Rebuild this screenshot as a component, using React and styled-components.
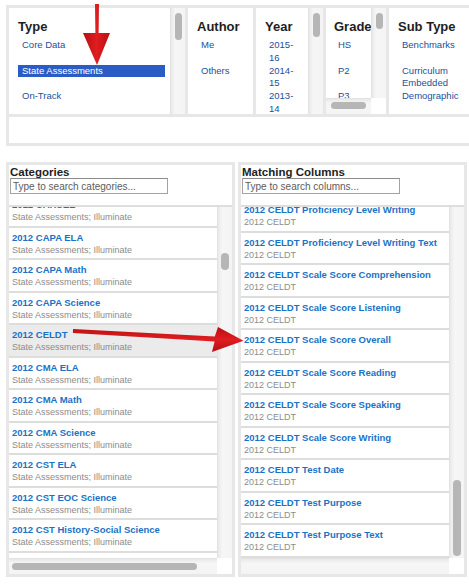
import React from "react";
import styled, { createGlobalStyle } from "styled-components";

const GlobalStyle = createGlobalStyle`
    html, body {
        margin: 0;
        padding: 0;
        background: #ffffff;
        overflow: hidden;
    }
    body {
        font-family: "Liberation Sans", Arial, sans-serif;
    }
`;

const FRAME = "#e7e7e7";

const typeItems = ["Core Data", "State Assessments", "On-Track"];
const authorItems = ["Me", "Others"];
const yearItems = ["2015-16", "2014-15", "2013-14"];
const gradeItems = ["HS", "P2", "P3"];
const subTypeItems = ["Benchmarks", "Curriculum Embedded", "Demographic"];

const categories = [
    "2012 CAHSEE",
    "2012 CAPA ELA",
    "2012 CAPA Math",
    "2012 CAPA Science",
    "2012 CELDT",
    "2012 CMA ELA",
    "2012 CMA Math",
    "2012 CMA Science",
    "2012 CST ELA",
    "2012 CST EOC Science",
    "2012 CST History-Social Science",
    "2012 CST Math",
];

const columns = [
    "Proficiency Level Writing",
    "Proficiency Level Writing Text",
    "Scale Score Comprehension",
    "Scale Score Listening",
    "Scale Score Overall",
    "Scale Score Reading",
    "Scale Score Speaking",
    "Scale Score Writing",
    "Test Date",
    "Test Purpose",
    "Test Purpose Text",
];

const App = () => {
    return (
        <Page>
            <GlobalStyle />
            <FilterPanel>
                <ColumnsRow>
                    <Column width="179px">
                        <ColumnBody>
                            <ColHeader>Type</ColHeader>
                            {typeItems.map((t) => (
                                <Option key={t} padRight="5px">
                                    <OptionLabel selected={t === "State Assessments"}>{t}</OptionLabel>
                                </Option>
                            ))}
                        </ColumnBody>
                        <VTrack>
                            <Thumb top="5px" height="27px" />
                        </VTrack>
                    </Column>

                    <Column width="68px">
                        <ColumnBody>
                            <ColHeader>Author</ColHeader>
                            {authorItems.map((t) => (
                                <Option key={t}>
                                    <OptionLabel>{t}</OptionLabel>
                                </Option>
                            ))}
                        </ColumnBody>
                    </Column>

                    <Column width="70px">
                        <ColumnBody>
                            <ColHeader>Year</ColHeader>
                            {yearItems.map((t) => (
                                <Option key={t}>
                                    <OptionLabel labelWidth="30px">{t}</OptionLabel>
                                </Option>
                            ))}
                        </ColumnBody>
                        <VTrack>
                            <Thumb top="5px" height="24px" />
                        </VTrack>
                    </Column>

                    <Column width="63px" stacked>
                        <GradeTop>
                            <ColumnBody pad="8px">
                                <ColHeader>Grade</ColHeader>
                                {gradeItems.map((t) => (
                                    <Option key={t}>
                                        <OptionLabel>{t}</OptionLabel>
                                    </Option>
                                ))}
                            </ColumnBody>
                            <VTrack>
                                <Thumb top="5px" height="16px" />
                            </VTrack>
                        </GradeTop>
                        <HBar>
                            <HTrack>
                                <HThumb left="5px" width="35px" top="3px" />
                            </HTrack>
                            <Corner />
                        </HBar>
                    </Column>

                    <Column width="90px" last>
                        <ColumnBody>
                            <ColHeader>Sub Type</ColHeader>
                            {subTypeItems.map((t) => (
                                <Option key={t}>
                                    <OptionLabel>{t}</OptionLabel>
                                </Option>
                            ))}
                        </ColumnBody>
                    </Column>
                </ColumnsRow>
                <FilterFooter />
            </FilterPanel>

            <Lists>
                <ListPanel>
                    <PanelHead>
                        <PanelTitle>Categories</PanelTitle>
                        <SearchInput placeholder="Type to search categories..." />
                    </PanelHead>
                    <ListArea>
                        <Rows>
                            <RowsInner offset="-12px">
                                {categories.map((c) => (
                                    <Row key={c} selected={c === "2012 CELDT"}>
                                        <RowTitle>{c}</RowTitle>
                                        <RowSub>State Assessments; Illuminate</RowSub>
                                    </Row>
                                ))}
                            </RowsInner>
                        </Rows>
                        <VTrack list>
                            <Thumb top="46px" height="17px" wide />
                        </VTrack>
                    </ListArea>
                    <HBar list>
                        <HTrack>
                            <HThumb left="3px" width="185px" top="4px" />
                        </HTrack>
                        <Corner />
                    </HBar>
                </ListPanel>

                <ListPanel>
                    <PanelHead>
                        <PanelTitle>Matching Columns</PanelTitle>
                        <SearchInput placeholder="Type to search columns..." />
                    </PanelHead>
                    <ListArea>
                        <Rows>
                            <RowsInner offset="-6.7px">
                                {columns.map((c) => (
                                    <Row key={c}>
                                        <RowTitle>2012 CELDT {c}</RowTitle>
                                        <RowSub>2012 CELDT</RowSub>
                                    </Row>
                                ))}
                            </RowsInner>
                        </Rows>
                        <VTrack list>
                            <Thumb top="273px" height="76px" wide />
                        </VTrack>
                    </ListArea>
                    <HBar list>
                        <HTrack />
                        <Corner />
                    </HBar>
                </ListPanel>
            </Lists>

            <ArrowLayer viewBox="0 0 469 584">
                <defs>
                    <linearGradient id="redV" x1="0" y1="0" x2="1" y2="0">
                        <stop offset="0" stopColor="#b80f12" />
                        <stop offset="0.5" stopColor="#e01d20" />
                        <stop offset="1" stopColor="#b80f12" />
                    </linearGradient>
                    <linearGradient id="redH" x1="0" y1="0" x2="0" y2="1">
                        <stop offset="0" stopColor="#b80f12" />
                        <stop offset="0.5" stopColor="#e01d20" />
                        <stop offset="1" stopColor="#b80f12" />
                    </linearGradient>
                </defs>
                <polygon
                    points="95,4 99,4 98.6,33 110,33 97,65 83,33 95.4,33"
                    fill="url(#redV)"
                />
                <polygon
                    points="73,329 214.8,336.6 218,327 243.5,340.8 212,352 214.6,341.6 72.9,333"
                    fill="url(#redH)"
                />
            </ArrowLayer>
        </Page>
    );
};

const Page = styled.div`
    position: relative;
    width: 469px;
    height: 584px;
    overflow: hidden;
    padding: 5px 0 0 6px;
    box-sizing: border-box;
`;

const FilterPanel = styled.div`
    display: flex;
    flex-direction: column;
    width: 480px;
    border: 3px solid ${FRAME};
    border-right: none;
    background: #ffffff;
`;

const ColumnsRow = styled.div`
    display: flex;
    height: 106px;
`;

const Column = styled.div`
    display: flex;
    flex-direction: ${(props) => (props.stacked ? "column" : "row")};
    width: ${(props) => props.width};
    flex-shrink: 0;
    box-sizing: border-box;
    border-right: ${(props) => (props.last ? "none" : `3px solid ${FRAME}`)};
    overflow: hidden;
`;

const ColumnBody = styled.div`
    flex: 1;
    min-width: 0;
    overflow: hidden;
    padding: 11px 0 0 ${(props) => props.pad || "9px"};
`;

const ColHeader = styled.div`
    font-size: 13px;
    font-weight: bold;
    line-height: 15px;
    color: #1e1e1e;
    white-space: nowrap;
    margin-bottom: 5px;
`;

const Option = styled.div`
    min-height: 25.6px;
    padding-right: ${(props) => props.padRight || "0"};
`;

const OptionLabel = styled.span`
    display: block;
    ${(props) => (props.labelWidth ? `width: ${props.labelWidth};` : "")}
    padding-left: 4px;
    font-size: 9.5px;
    line-height: 12.8px;
    color: ${(props) => (props.selected ? "#ffffff" : "#22509c")};
    background: ${(props) => (props.selected ? "#2b5cc6" : "transparent")};
`;

const GradeTop = styled.div`
    display: flex;
    height: 90px;
    overflow: hidden;
`;

const VTrack = styled.div`
    display: flex;
    flex-direction: column;
    align-items: center;
    width: 15px;
    flex-shrink: 0;
    box-sizing: border-box;
    background: linear-gradient(to right, #e9e9e9, #f6f6f6 30%, #f4f4f4);
    border-left: 1px solid #e2e2e2;
`;

const Thumb = styled.div`
    margin-top: ${(props) => props.top};
    width: ${(props) => (props.wide ? "8px" : "7px")};
    height: ${(props) => props.height};
    border-radius: 4px;
    background: #b6b6b6;
`;

const HBar = styled.div`
    display: flex;
    height: ${(props) => (props.list ? "16px" : "16px")};
    flex-shrink: 0;
`;

const HTrack = styled.div`
    flex: 1;
    box-sizing: border-box;
    border-top: 1px solid #e2e2e2;
    background: linear-gradient(to bottom, #e9e9e9, #f6f6f6 30%, #f4f4f4);
`;

const HThumb = styled.div`
    margin: ${(props) => props.top} 0 0 ${(props) => props.left};
    width: ${(props) => props.width};
    height: 7px;
    border-radius: 4px;
    background: #b6b6b6;
`;

const Corner = styled.div`
    width: 15px;
    flex-shrink: 0;
    background: #ffffff;
`;

const FilterFooter = styled.div`
    height: 26px;
    border-top: 3px solid ${FRAME};
`;

const Lists = styled.div`
    display: flex;
    gap: 3px;
    margin-top: 16px;
`;

const ListPanel = styled.div`
    display: flex;
    flex-direction: column;
    width: 229px;
    flex-shrink: 0;
    box-sizing: border-box;
    border: 3px solid ${FRAME};
    background: #ffffff;
`;

const PanelHead = styled.div`
    height: 39px;
    padding: 1px 0 0 1px;
    border-bottom: 2px solid #dedede;
`;

const PanelTitle = styled.div`
    font-size: 11.5px;
    font-weight: bold;
    line-height: 12px;
    color: #1e1e1e;
`;

const SearchInput = styled.input`
    display: block;
    width: 158px;
    height: 16px;
    box-sizing: border-box;
    margin: 0;
    padding: 0 2px;
    border: 1px solid #a3a3a3;
    border-top-color: #8a8a8a;
    font-family: "Liberation Sans", Arial, sans-serif;
    font-size: 10px;
    outline: none;
    &::placeholder {
        color: #5c5c5c;
    }
`;

const ListArea = styled.div`
    display: flex;
    height: 351px;
`;

const Rows = styled.div`
    flex: 1;
    overflow: hidden;
    background: #f4f4f4;
`;

const RowsInner = styled.div`
    margin-top: ${(props) => props.offset};
`;

const Row = styled.div`
    height: 32.5px;
    box-sizing: border-box;
    padding: 3px 0 0 3px;
    border-bottom: 2px solid #dddddd;
    background: ${(props) => (props.selected ? "#ebebeb" : "#ffffff")};
    white-space: nowrap;
    overflow: hidden;
`;

const RowTitle = styled.div`
    font-size: 9.5px;
    font-weight: bold;
    line-height: 13px;
    color: #1a72c6;
`;

const RowSub = styled.div`
    font-size: 9px;
    line-height: 13px;
    color: #8c8c8c;
`;

const ArrowLayer = styled.svg`
    position: absolute;
    top: 0;
    left: 0;
    width: 469px;
    height: 584px;
    pointer-events: none;
`;

export default App;
